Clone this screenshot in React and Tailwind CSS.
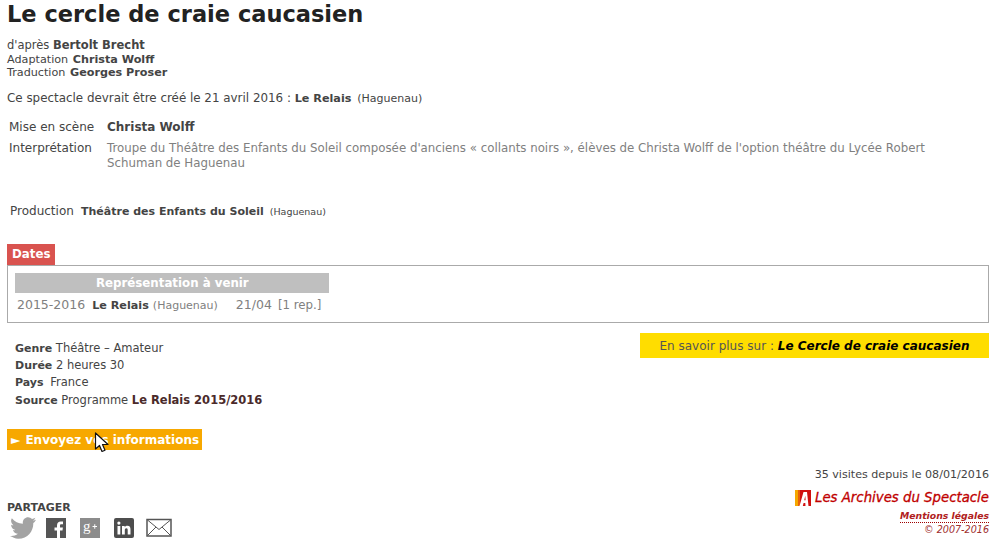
const Twitter = () => (
  <svg width="26" height="22" viewBox="0 0 24 20" fill="#a3a3a3">
    <path d="M24 2.400c-.9.400-1.800.700-2.800.800 1-.6 1.800-1.600 2.200-2.700-1 .600-2 1-3.100 1.200C19.300.700 18 0 16.700 0c-2.700 0-4.900 2.200-4.900 4.900 0 .400 0 .800.100 1.100C7.800 5.800 4.200 3.900 1.700.900c-.4.700-.7 1.600-.7 2.500 0 1.700.900 3.200 2.200 4.100-.8 0-1.600-.2-2.200-.6v.100c0 2.400 1.700 4.400 3.900 4.800-.4.100-.8.200-1.300.200-.3 0-.6 0-.9-.1.600 2 2.400 3.400 4.600 3.400-1.700 1.300-3.800 2.100-6.100 2.100-.4 0-.8 0-1.200-.1C2.200 18.200 4.800 20 7.500 20c9.100 0 14-7.500 14-14v-.6c1-.7 1.800-1.600 2.500-3z" />
  </svg>
);

const Facebook = () => (
  <svg width="20" height="20" viewBox="0 0 20 20">
    <rect width="20" height="20" fill="#555555" />
    <path fill="#ffffff" d="M14 20v-7.500h2.500l.4-3H14V7.700c0-.9.300-1.400 1.500-1.400H17V3.600c-.3 0-1.200-.1-2.200-.1-2.300 0-3.800 1.400-3.800 3.900v2.100H8.500v3H11V20z" />
  </svg>
);

const GooglePlus = () => (
  <svg width="20" height="20" viewBox="0 0 20 20">
    <rect width="20" height="20" fill="#8c8c8c" />
    <text x="3" y="13" fontSize="15" fontFamily="Liberation Serif, serif" fill="#ffffff">g</text>
    <path stroke="#ffffff" strokeWidth="1" d="M12.500 8.500h4.500M14.750 6.250v4.500" />
  </svg>
);

const Linkedin = () => (
  <svg width="20" height="20" viewBox="0 0 20 20">
    <rect width="20" height="20" rx="2" fill="#4d4d4d" />
    <path fill="#ffffff" d="M3.500 8h2.800v8.500H3.500zM4.900 3.500a1.600 1.600 0 1 1 0 3.200 1.600 1.600 0 0 1 0-3.200zM8 8h2.700v1.200c.5-.8 1.400-1.400 2.700-1.400 2.500 0 3.100 1.600 3.100 3.900v4.800h-2.800v-4.300c0-1.100-.2-2-1.300-2-1.200 0-1.600.9-1.600 2v4.300H8z" />
  </svg>
);

const Mail = () => (
  <svg width="26" height="20" viewBox="0 0 26 20" fill="none" stroke="#555555">
    <rect x="1" y="1.500" width="24" height="16.500" strokeWidth="1.500" />
    <path strokeWidth="1" d="M1.500 2l11.500 9.500L24.500 2M1.500 17.500l8.500-8.500M24.500 17.500L16 9" />
  </svg>
);

const ArchivesLogo = () => (
  <svg width="16" height="16" viewBox="0 0 16 16">
    <rect width="3" height="16" fill="#f5a800" />
    <rect x="3" width="3" height="16" fill="#e8600a" />
    <rect x="5" width="11" height="16" fill="#d01010" />
    <path fill="#ffffff" d="M4.500 16L8.500 2h3.500l1.500 14h-3l-.2-3H8.600l-.8 3zM9.200 10.300h1.400l-.3-4.500z" />
  </svg>
);

const Cursor = () => (
  <svg className="absolute left-[87px] top-[3px]" width="16" height="22" viewBox="0 0 16 22">
    <path d="M1.500 1v16l4-3.500 2.500 6 3-1.300-2.500-5.700h5.500z" fill="#ffffff" stroke="#111111" strokeWidth="1.200" strokeLinejoin="round" />
  </svg>
);

export default function App() {
  return (
    <div className="h-[554px] overflow-hidden bg-white pl-[7px] pr-[17px] text-[#444] font-['DejaVu_Sans','Liberation_Sans',sans-serif] text-[11px]">
      <h1 className="pt-[1px] h-[38px] text-[22.500px] leading-[26px] font-bold text-[#222]">Le cercle de craie caucasien</h1>

      <div className="text-[11.500px] leading-[15px]">d'après <b>Bertolt Brecht</b></div>
      <div className="text-[11.200px] leading-[13px]">Adaptation <b className="ml-[1px]">Christa Wolff</b></div>
      <div className="text-[11.200px] leading-[14px]">Traduction <b className="ml-[1px]">Georges Proser</b></div>

      <p className="mt-[11px] text-[11.900px] leading-[14px]">
        Ce spectacle devrait être créé le 21 avril 2016 : <b className="text-[11.200px]">Le Relais</b> <span className="ml-[2px] text-[11px]">(Haguenau)</span>
      </p>

      <div className="mt-[14px] ml-[2px] flex text-[12px] leading-[14px]">
        <div className="w-[98px]">Mise en scène</div>
        <b>Christa Wolff</b>
      </div>
      <div className="mt-[7px] ml-[2px] flex text-[12px] leading-[15px]">
        <div className="w-[98px] shrink-0">Interprétation</div>
        <div className="w-[840px] text-[11.800px] text-[#808080]">
          Troupe du Théâtre des Enfants du Soleil composée d'anciens « collants noirs », élèves de Christa Wolff de l'option théâtre du Lycée Robert Schuman de Haguenau
        </div>
      </div>

      <div className="mt-[33px] ml-[3px] flex items-baseline leading-[14px]">
        <span className="text-[12px] w-[71px]">Production</span>
        <b>Théâtre des Enfants du Soleil</b>
        <span className="ml-[6px] text-[9.500px]">(Haguenau)</span>
      </div>

      <div className="mt-[25px] w-fit h-[21px] bg-[#d9534f] px-[5px] text-[11.800px] leading-[21px] font-bold text-white">Dates</div>
      <div className="h-[58px] border border-[#aaaaaa] pl-[7px] pt-[7px]">
        <div className="h-[20px] w-[314px] bg-[#bfbfbf] pl-[81px] text-[11.800px] leading-[20px] font-bold text-white">Représentation à venir</div>
        <div className="mt-[5px] ml-[2px] flex items-baseline leading-[14px] text-[#808080]">
          <span className="text-[12.500px]">2015-2016</span>
          <b className="ml-[7px] text-[11.200px] text-[#444]">Le Relais</b>
          <span className="ml-[4px]">(Haguenau)</span>
          <span className="ml-[18px] text-[12.500px]">21/04</span>
          <span className="ml-[6px] text-[11.800px]">[1 rep.]</span>
        </div>
      </div>

      <div className="mt-[10px] flex justify-between">
        <div className="ml-[8px] pt-[7px] leading-[17px] text-[11.500px]">
          <div><b className="text-[11px]">Genre</b> Théâtre – Amateur</div>
          <div><b className="text-[11px]">Durée</b> 2 heures 30</div>
          <div className="mb-[1px]"><b className="text-[11px]">Pays</b> <span className="ml-[3px]">France</span></div>
          <div><b className="text-[11px]">Source</b> Programme <b className="text-[#4a2a2a]">Le Relais 2015/2016</b></div>
        </div>
        <div className="h-[25px] w-[349px] bg-[#ffdd00] pt-[1px] text-center text-[12px] leading-[25px] text-[#555]">
          En savoir plus sur : <b className="italic text-black">Le Cercle de craie caucasien</b>
        </div>
      </div>

      <div className="relative mt-[20px] h-[21px] w-[195px] bg-[#f7a800] pl-[4px] pt-[1px] text-[12px] leading-[21px] font-bold text-white">
        ► <span className="ml-[1px]">Envoyez vos informations</span>
        <Cursor />
      </div>

      <div className="mt-[18px] flex justify-between">
        <div className="pt-[33px]">
          <div className="leading-[14px] font-bold">PARTAGER</div>
          <div className="mt-[2px] ml-[3px] flex items-center">
            <Twitter />
            <div className="ml-[10px]"><Facebook /></div>
            <div className="ml-[14px]"><GooglePlus /></div>
            <div className="ml-[14px]"><Linkedin /></div>
            <div className="ml-[12px]"><Mail /></div>
          </div>
        </div>
        <div className="flex flex-col items-end">
          <div className="text-[11.100px] leading-[14px]">35 visites depuis le 08/01/2016</div>
          <div className="mt-[8px] flex items-center gap-[4px] leading-[16px] italic text-[#c00000]">
            <ArchivesLogo />
            <span className="text-[13.300px] [-webkit-text-stroke:0.300px_#c00000]">Les Archives du Spectacle</span>
          </div>
          <div className="mt-[4px] border-b border-dotted border-[#a00000] text-[9.300px] leading-[12px] font-bold italic text-[#b02020]">Mentions légales</div>
          <div className="text-[9.600px] leading-[14px] italic text-[#a03030]">© 2007-2016</div>
        </div>
      </div>
    </div>
  );
}
